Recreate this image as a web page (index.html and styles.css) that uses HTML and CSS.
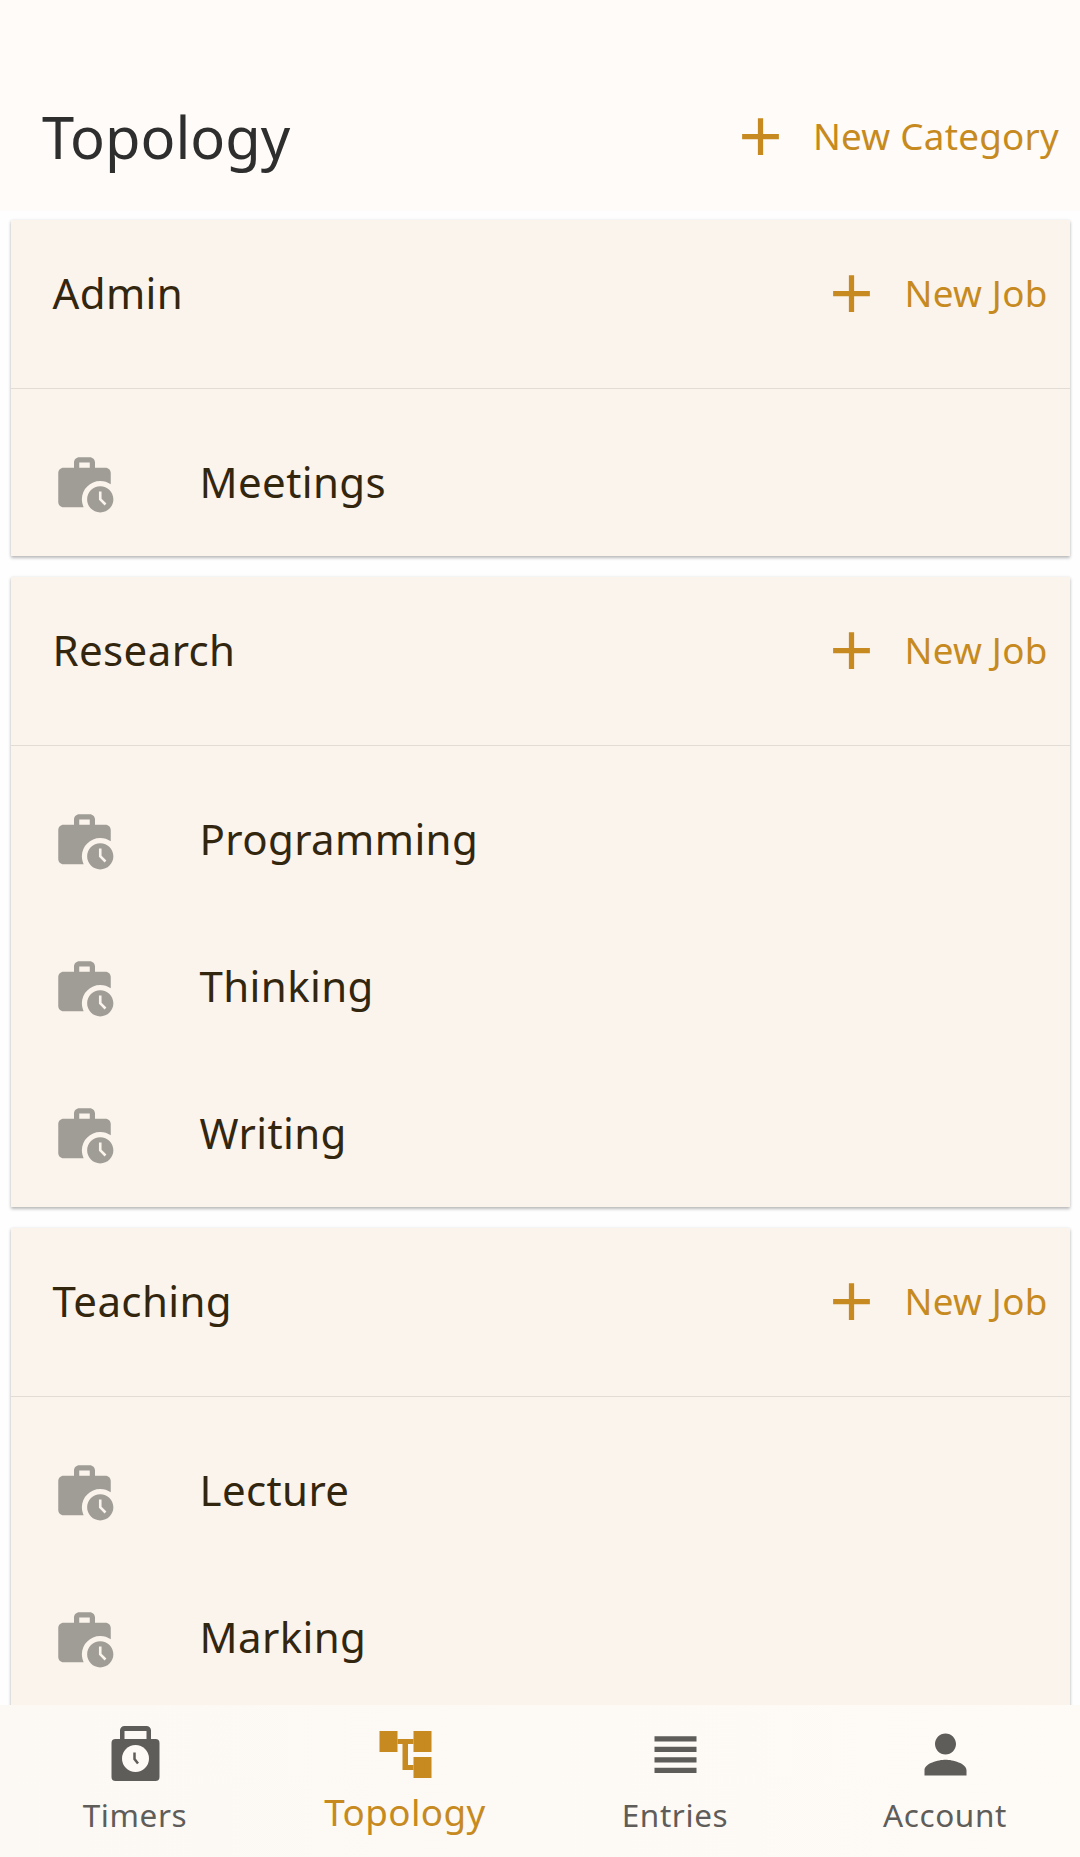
FILE: index.html
```html
<!DOCTYPE html>
<html>
<head>
    <meta charset="utf-8">
    <title>Topology</title>
    <link rel="stylesheet" href="styles.css">
</head>
<body>
    <svg class="sprites" width="0" height="0">
        <symbol id="add" viewBox="0 0 24 24"><path d="M19 13h-6v6h-2v-6H5v-2h6V5h2v6h6v2z"/></symbol>
        <symbol id="job" viewBox="0 0 24 24">
            <path d="M18 11c1.49 0 2.87.47 4 1.26V8c0-1.11-.89-2-2-2h-4V4c0-1.11-.89-2-2-2h-4c-1.11 0-2 .89-2 2v2H4c-1.11 0-1.99.89-1.99 2L2 19c0 1.11.89 2 2 2h7.68c-.43-.91-.68-1.92-.68-3 0-3.87 3.13-7 7-7zm-8-7h4v2h-4V4z"/>
            <path d="M18 13c-2.76 0-5 2.24-5 5s2.24 5 5 5 5-2.24 5-5-2.24-5-5-5zm1.65 7.35L17.5 18.2V15h1v2.79l1.85 1.85-.7.71z"/>
        </symbol>
    </svg>
    <div class="app">
        <header class="topbar">
            <h1 class="title">Topology</h1>
            <a class="action">
                <svg class="action-icon"><use href="#add"/></svg>
                <span>New Category</span>
            </a>
        </header>
        <main class="content">
            <section class="card">
                <div class="card-head">
                    <h2 class="card-title">Admin</h2>
                    <a class="action">
                        <svg class="action-icon"><use href="#add"/></svg>
                        <span>New Job</span>
                    </a>
                </div>
                <ul class="jobs">
                    <li class="job"><svg class="job-icon"><use href="#job"/></svg><span>Meetings</span></li>
                </ul>
            </section>
            <section class="card">
                <div class="card-head">
                    <h2 class="card-title">Research</h2>
                    <a class="action">
                        <svg class="action-icon"><use href="#add"/></svg>
                        <span>New Job</span>
                    </a>
                </div>
                <ul class="jobs">
                    <li class="job"><svg class="job-icon"><use href="#job"/></svg><span>Programming</span></li>
                    <li class="job"><svg class="job-icon"><use href="#job"/></svg><span>Thinking</span></li>
                    <li class="job"><svg class="job-icon"><use href="#job"/></svg><span>Writing</span></li>
                </ul>
            </section>
            <section class="card">
                <div class="card-head">
                    <h2 class="card-title">Teaching</h2>
                    <a class="action">
                        <svg class="action-icon"><use href="#add"/></svg>
                        <span>New Job</span>
                    </a>
                </div>
                <ul class="jobs">
                    <li class="job"><svg class="job-icon"><use href="#job"/></svg><span>Lecture</span></li>
                    <li class="job"><svg class="job-icon"><use href="#job"/></svg><span>Marking</span></li>
                </ul>
            </section>
        </main>
        <nav class="tabs">
            <a class="tab">
                <svg class="tab-icon" viewBox="0 0 63 63">
                    <path fill-rule="evenodd" d="M16 16V7.500A4.500 4.500 0 0 1 20.500 3h22A4.500 4.500 0 0 1 47 7.500V16h4.500a4 4 0 0 1 4 4v34a4 4 0 0 1-4 4h-40a4 4 0 0 1-4-4V20a4 4 0 0 1 4-4zm4.500-8v8h22V8z"/>
                    <circle cx="31.500" cy="35.500" r="13.500" class="tab-clock"/>
                    <path d="M30.500 29.500v6.500l3.500 4.500" class="tab-hand"/>
                </svg>
                <span>Timers</span>
            </a>
            <a class="tab tab-active">
                <svg class="tab-icon" viewBox="0 0 63 63">
                    <rect x="5.500" y="8" width="18" height="21"/>
                    <rect x="39.500" y="8" width="18" height="21"/>
                    <rect x="39.500" y="34" width="18" height="21"/>
                    <rect x="23.500" y="16" width="16" height="5"/>
                    <rect x="28.500" y="21" width="5.500" height="26"/>
                    <rect x="34" y="42" width="5.500" height="5"/>
                </svg>
                <span>Topology</span>
            </a>
            <a class="tab">
                <svg class="tab-icon" viewBox="0 0 24 24"><path d="M4 15h16v-2H4v2zm0 4h16v-2H4v2zm0-8h16V9H4v2zm0-6v2h16V5H4z"/></svg>
                <span>Entries</span>
            </a>
            <a class="tab">
                <svg class="tab-icon" viewBox="0 0 24 24"><path d="M12 12c2.210 0 4-1.790 4-4s-1.790-4-4-4-4 1.790-4 4 1.790 4 4 4zm0 2c-2.670 0-8 1.340-8 4v2h16v-2c0-2.660-5.330-4-8-4z"/></svg>
                <span>Account</span>
            </a>
        </nav>
    </div>
</body>
</html>
```

FILE: styles.css
```css
* {
    box-sizing: border-box;
}
html, body {
    margin: 0;
    padding: 0;
}
body {
    font-family: "Noto Sans", sans-serif;
    background-color: #fefefe;
    color: #33260f;
}
h1, h2, ul {
    margin: 0;
    padding: 0;
    font-weight: normal;
}
ul {
    list-style: none;
}
.sprites {
    position: absolute;
}
.app {
    height: 1857px;
    display: flex;
    flex-direction: column;
    overflow: hidden;
}
.topbar {
    flex: none;
    height: 211px;
    padding: 61px 21px 0 42px;
    display: flex;
    align-items: center;
    justify-content: space-between;
    background-color: #fefbf8;
}
.title {
    font-size: 57.75px;
    color: #2e2e2e;
}
.action {
    display: flex;
    align-items: center;
    gap: 21px;
    font-size: 36.75px;
    letter-spacing: 0.26px;
    color: #c68a20;
}
.action-icon {
    width: 63px;
    height: 63px;
    fill: #c68a20;
}
.content {
    flex: 1;
    min-height: 0;
    overflow: hidden;
    padding: 9px 10.5px 0;
    display: flex;
    flex-direction: column;
    gap: 21px;
}
.card {
    flex: none;
    background-color: #fbf4ed;
    box-shadow: 0 2px 3px rgba(0, 0, 0, 0.25), 0 0 3px rgba(0, 0, 0, 0.08);
}
.card-head {
    height: 168px;
    padding: 0 22px 21px 42px;
    display: flex;
    align-items: center;
    justify-content: space-between;
}
.card-title {
    font-size: 42px;
    letter-spacing: 0.39px;
    padding-bottom: 2px;
}
.card-head .action span {
    padding-bottom: 2px;
}
.jobs {
    border-top: 1px solid #e2dcd6;
    padding-top: 20px;
}
.job {
    height: 147px;
    padding-left: 42px;
    display: flex;
    align-items: center;
    gap: 84px;
    font-size: 42px;
    letter-spacing: 0.39px;
}
.job span {
    padding-bottom: 2px;
}
.job-icon {
    flex: none;
    width: 63px;
    height: 63px;
    margin-top: 2px;
    fill: #a09c96;
}
.tabs {
    flex: none;
    height: 152px;
    display: grid;
    grid-template-columns: repeat(4, 1fr);
    background: linear-gradient(90deg, #fcf8f4, #fefbf7);
    position: relative;
}
.tab {
    padding-top: 18px;
    display: flex;
    flex-direction: column;
    align-items: center;
    font-size: 31.5px;
    letter-spacing: 0.6px;
    line-height: 42px;
    color: #5f5d5a;
}
.tab span {
    margin-top: 8px;
}
.tab-icon {
    width: 63px;
    height: 63px;
    fill: #5f5d5a;
}
.tab-clock {
    fill: #fdf9f5;
}
.tab-hand {
    fill: none;
    stroke: #5f5d5a;
    stroke-width: 2.5;
}
.tab-active {
    font-size: 36.75px;
    letter-spacing: 0.45px;
    color: #c68a20;
}
.tab-active span {
    margin-top: 5px;
}
.tab-active .tab-icon {
    fill: #c68a20;
}
```
